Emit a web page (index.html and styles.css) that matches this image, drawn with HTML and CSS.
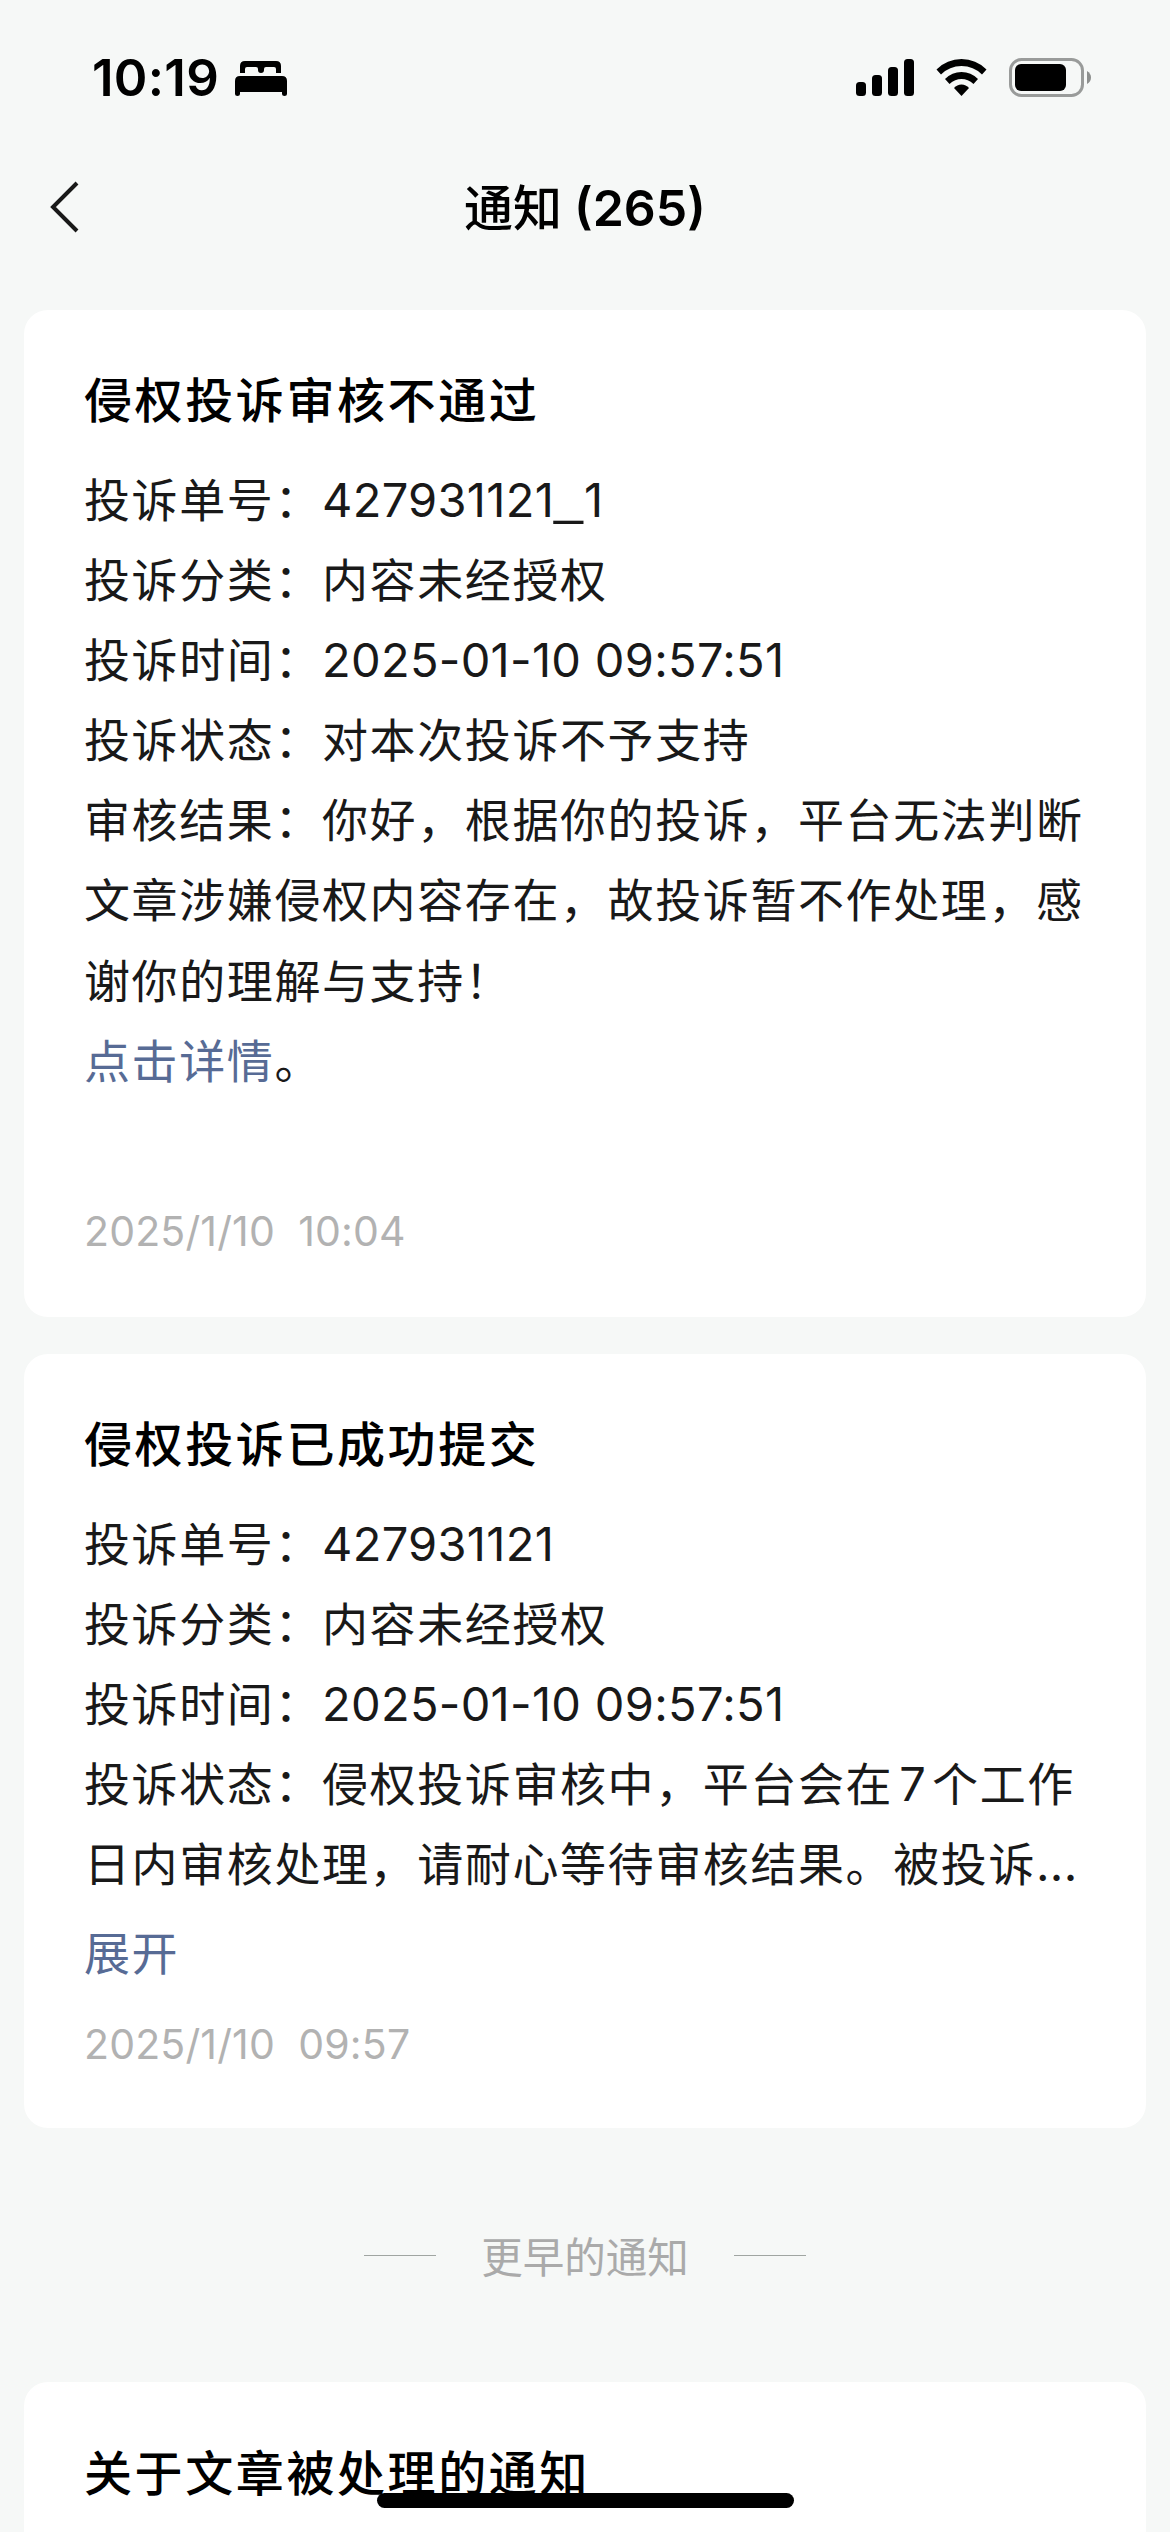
FILE: index.html
```html
<!DOCTYPE html>
<html lang="zh-CN">
<head>
    <meta charset="UTF-8">
    <title>通知</title>
    <link rel="stylesheet" href="styles.css">
</head>
<body>
    <div class="status-bar">
        <span class="time">10:19</span>
        <svg class="bed" width="52" height="35" viewBox="0 0 52 35">
            <path d="M5 12V5Q5 0 10 0H41Q46 0 46 5V12H41V8Q41 6 39 6H31Q29 6 29 8V9Q29 12 26 12Q23 12 23 9V8Q23 6 21 6H12Q10 6 10 8V12Z"/>
            <path d="M0 20Q0 15 5 15H47Q52 15 52 20V33Q52 35 49.500 35Q47 35 47 33V31H5V33Q5 35 2.500 35Q0 35 0 33Z"/>
        </svg>
        <svg class="signal" width="58" height="37" viewBox="0 0 58 37">
            <rect x="0" y="23" width="10" height="14" rx="3.500"/>
            <rect x="16" y="16" width="10" height="21" rx="3.500"/>
            <rect x="32" y="8" width="10" height="29" rx="3.500"/>
            <rect x="48" y="0" width="10" height="37" rx="3.500"/>
        </svg>
        <svg class="wifi" width="51" height="37" viewBox="0 0 51 37">
            <path d="M0.500 10.500Q11 0 25.500 0T50.500 10.500L46 15.500Q37.500 7 25.500 7T5 15.500Z"/>
            <path d="M9 20Q16 13 25.500 13T42 20L37.500 25Q32 20 25.500 20T13.500 25Z"/>
            <path d="M18 29Q21 25.500 25.500 25.500T33 29L25.500 37Z"/>
        </svg>
        <svg class="battery" width="83" height="39" viewBox="0 0 83 39">
            <rect x="1.500" y="1.500" width="72" height="36" rx="11" fill="none" stroke="#999b9a" stroke-width="3"/>
            <rect x="6" y="6" width="51" height="27" rx="6"/>
            <path d="M78 13Q82 15.500 82 19.500T78 26Z" fill="#8d8f8e"/>
        </svg>
    </div>

    <div class="nav">
        <svg class="back" width="30" height="54" viewBox="0 0 30 54">
            <path d="M27 3L3 27L27 51" fill="none" stroke="#191919" stroke-width="4"/>
        </svg>
        <h1>通知<span class="count">(265)</span></h1>
    </div>

    <div class="card first">
        <h2>侵权投诉审核不通过</h2>
        <p>投诉单号：<span class="num">427931121<span class="underscore">_</span>1</span></p>
        <p>投诉分类：内容未经授权</p>
        <p>投诉时间：<span class="num">2025-01-10 09:57:51</span></p>
        <p>投诉状态：对本次投诉不予支持</p>
        <p>审核结果：你好，根据你的投诉，平台无法判断<br>文章涉嫌侵权内容存在，故投诉暂不作处理，感<br>谢你的理解与支持！</p>
        <p><a>点击详情</a>。</p>
        <div class="date">2025/1/10&nbsp; 10:04</div>
    </div>

    <div class="card second">
        <h2>侵权投诉已成功提交</h2>
        <p>投诉单号：<span class="num">427931121</span></p>
        <p>投诉分类：内容未经授权</p>
        <p>投诉时间：<span class="num">2025-01-10 09:57:51</span></p>
        <p>投诉状态：侵权投诉审核中，平台会在<span class="num seven">7</span>个工作<br>日内审核处理，请耐心等待审核结果。被投诉<span class="num">...</span></p>
        <p class="more"><a>展开</a></p>
        <div class="date">2025/1/10&nbsp; 09:57</div>
    </div>

    <div class="earlier"><span>更早的通知</span></div>

    <div class="card third">
        <h2>关于文章被处理的通知</h2>
    </div>

    <div class="home-bar"></div>
</body>
</html>
```

FILE: styles.css
```css
* {
    box-sizing: border-box;
}
body {
    margin: 0;
    width: 1170px;
    height: 2532px;
    overflow: hidden;
    position: relative;
    background-color: #f6f8f7;
    color: #191919;
    font-family: "Noto Sans CJK SC", sans-serif;
}
.status-bar {
    height: 158px;
    padding: 58px 78px 0 92px;
    display: flex;
    align-items: flex-start;
}
.time {
    width: 143px;
    font: 600 51px/40px Inter, sans-serif;
    letter-spacing: 0.3px;
    color: #000;
}
.bed {
    margin-top: 3px;
}
.signal {
    margin: 1px 22px 0 auto;
}
.wifi {
    margin: 1px 22px 0 0;
}
.nav {
    height: 152px;
    display: flex;
    align-items: center;
    justify-content: center;
    position: relative;
    padding-bottom: 58px;
}
.back {
    position: absolute;
    left: 50px;
    top: 22px;
}
h1 {
    margin: 0;
    font-size: 49px;
    font-weight: 500;
    line-height: 94px;
    color: #000;
}
.count {
    font-family: Inter, sans-serif;
    font-size: 50px;
    font-weight: 600;
    line-height: 0;
    margin-left: 12px;
}
.card {
    margin: 0 24px;
    padding: 47px 60px 0;
    background-color: #fff;
    border-radius: 24px;
}
.first {
    height: 1007px;
}
.second {
    height: 774px;
    margin-top: 37px;
}
.third {
    height: 174px;
    padding-top: 48px;
}
h2 {
    margin: 0 0 20px;
    font-size: 48px;
    font-weight: 500;
    line-height: 80px;
    letter-spacing: 2.6px;
    color: #000;
}
p {
    margin: 0;
    font-size: 46px;
    line-height: 80.1px;
    letter-spacing: 1.6px;
    white-space: nowrap;
}
.num {
    font-family: Inter, sans-serif;
    font-size: 47px;
    line-height: 0;
    letter-spacing: 0.3px;
}
.underscore {
    font-family: "Liberation Sans", sans-serif;
    font-size: 52px;
    letter-spacing: 1px;
    vertical-align: 3px;
}
.seven {
    margin: 0 6px;
}
a {
    color: #576b95;
}
.date {
    margin-top: 103px;
    font: 41px/60px Inter, sans-serif;
    letter-spacing: 0.15px;
    color: #b2b2b2;
}
.more {
    margin-top: 9px;
}
.second .date {
    margin-top: 23px;
}
.earlier {
    height: 254px;
    display: flex;
    align-items: center;
    justify-content: center;
    gap: 45px;
    font-size: 41.5px;
    color: #aaa;
}
.earlier::before,
.earlier::after {
    content: "";
    width: 72px;
    height: 1px;
    background-color: #a0a5a2;
}
/* ios home indicator */
.home-bar {
    position: absolute;
    left: 377px;
    top: 2493px;
    width: 417px;
    height: 15px;
    border-radius: 8px;
    background-color: #000;
}
```
